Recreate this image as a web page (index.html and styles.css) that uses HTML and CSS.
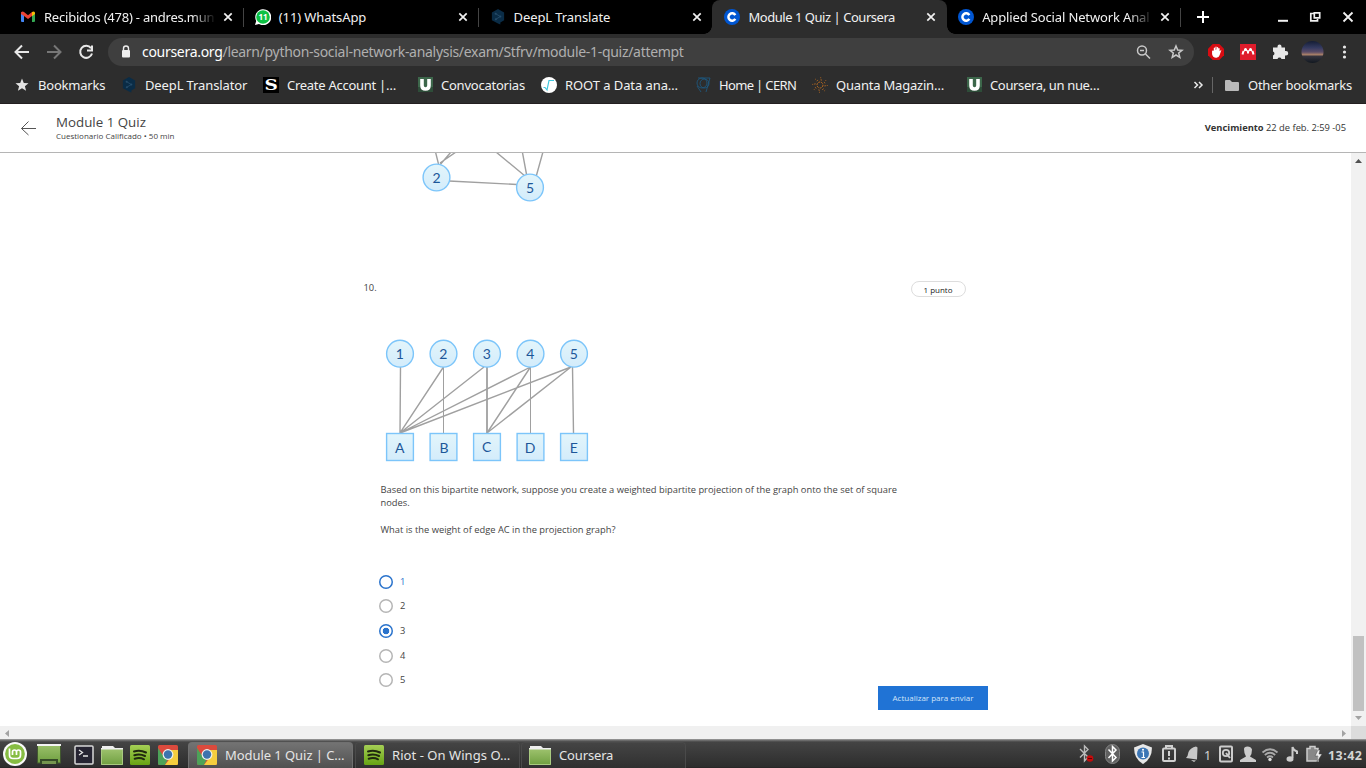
FILE: index.html
```html
<!DOCTYPE html>
<html lang="es">
<head>
<meta charset="utf-8">
<title>Module 1 Quiz | Coursera</title>
<link rel="stylesheet" href="styles.css">
</head>
<body>
<svg class="defs" width="0" height="0" aria-hidden="true">
  <defs>
    <linearGradient id="node" x1="0" y1="0" x2="0" y2="1"><stop offset="0" stop-color="#e3f5fb"/><stop offset="1" stop-color="#d3ecfb"/></linearGradient>
    <linearGradient id="green" x1="0" y1="0" x2="0" y2="1"><stop offset="0" stop-color="#9cc16c"/><stop offset="1" stop-color="#6f9f40"/></linearGradient>
    <linearGradient id="spot" x1="0" y1="0" x2="0" y2="1"><stop offset="0" stop-color="#a5cf55"/><stop offset="1" stop-color="#67a414"/></linearGradient>
    <linearGradient id="sky" x1="0" y1="0" x2="0" y2="1"><stop offset="0" stop-color="#141d35"/><stop offset=".3" stop-color="#343a60"/><stop offset=".5" stop-color="#5b4c68"/><stop offset=".62" stop-color="#a87f68"/><stop offset=".7" stop-color="#35333d"/><stop offset="1" stop-color="#111820"/></linearGradient>
    <symbol id="x" viewBox="0 0 10 10"><path d="M1.3 1.3 8.7 8.7M8.7 1.3 1.3 8.7" stroke="#f1f1f1" stroke-width="1.7" fill="none"/></symbol>
    <symbol id="deepl" viewBox="0 0 14 17"><path d="M7 0 13.5 3.7V12L9.5 14.3V16.5L7 15.3.5 12V3.7Z" fill="#0a2c46"/><path d="M4.5 5 9.5 8 4.8 10.8" stroke="#254b68" fill="none"/><circle cx="4.5" cy="5" r="1.1" fill="#254b68"/><circle cx="9.5" cy="8" r="1.1" fill="#254b68"/><circle cx="4.7" cy="10.8" r="1.1" fill="#254b68"/></symbol>
    <symbol id="coursera" viewBox="0 0 16 16"><circle cx="8" cy="8" r="8" fill="#0056d2"/><path d="M11.3 6.1A3.7 3.7 0 1 0 11.3 9.9" stroke="#fff" stroke-width="2.5" fill="none"/></symbol>
    <symbol id="u" viewBox="0 0 16 16"><path d="M1 0H16V15H1Z" fill="#3d674b"/><path d="M1 10H16V15H1Z" fill="#2e4d39"/><path d="M5 2V8.5Q5 12 8.5 12T12 8.5V2" stroke="#fff" stroke-width="3.6" fill="none"/></symbol>
    <symbol id="chrome" viewBox="0 0 20 20"><rect width="20" height="20" rx="1.5" fill="#db4a3d"/><path d="M0 3 6 12 10 14 7 20H1.500Q0 20 0 18.500Z" fill="#4da258"/><path d="M10 5H20V18.500Q20 20 18.500 20H7L13 12Z" fill="#f6ce3e"/><circle cx="10" cy="9.500" r="5.400" fill="#f1f1ec"/><circle cx="10" cy="9.500" r="4.200" fill="#3d73ad"/></symbol>
    <symbol id="spotify" viewBox="0 0 20 20"><rect width="20" height="20" rx="1.500" fill="url(#spot)"/><path d="M4 6.500Q10 4.500 16 7.500M4.300 10.200Q10 8.500 15 11M4.700 13.700Q10 12.300 14 14.300" stroke="#20280f" stroke-width="2" stroke-linecap="round" fill="none"/></symbol>
    <symbol id="folder" viewBox="0 0 22 20"><path d="M1 3V1H12L14 3H22V5H0V3Z" fill="#eee"/><rect x="0" y="4.500" width="22" height="15.500" fill="url(#green)"/><path d="M.5 5V19.500H21.500V5" fill="none" stroke="#a9ca80"/></symbol>
  </defs>
</svg>

<header class="browser">
  <div class="tabs">
    <div class="tab">
      <svg class="fav" viewBox="0 0 16 16"><path d="M1 3.500H4V13H2Q1 13 1 12Z" fill="#4285f4"/><path d="M12 3.500H15V12Q15 13 14 13H12Z" fill="#34a853"/><path d="M1 5V3.500Q2.500 1.800 4 3L8 6.200 12 3V7L8 10 4 7Z" fill="#ea4335"/><path d="M12 3Q14 1.800 15 3.500V5L12 7.200Z" fill="#fbbc04"/></svg>
      <span class="tab-name fade t-gmail">Recibidos (478) - andres.mun</span><svg class="close"><use href="#x"/></svg>
    </div>
    <div class="tab line">
      <svg class="fav" viewBox="0 0 16 16"><path d="M0 16 1.200 12A8 8 0 1 1 4 15Z" fill="#fff"/><circle cx="8" cy="8" r="6.800" fill="#0cc143"/><text x="8" y="10.500" text-anchor="middle" class="wa-count">11</text></svg>
      <span class="tab-name t-wa">(11) WhatsApp</span><svg class="close"><use href="#x"/></svg>
    </div>
    <div class="tab line">
      <svg class="fav"><use href="#deepl"/></svg>
      <span class="tab-name t-deepl">DeepL Translate</span><svg class="close"><use href="#x"/></svg>
    </div>
    <div class="tab active">
      <svg class="fav"><use href="#coursera"/></svg>
      <span class="tab-name t-quiz">Module 1 Quiz | Coursera</span><svg class="close"><use href="#x"/></svg>
    </div>
    <div class="tab last">
      <svg class="fav"><use href="#coursera"/></svg>
      <span class="tab-name fade t-asna">Applied Social Network Anal</span><svg class="close"><use href="#x"/></svg>
    </div>
    <div class="window-controls line">
      <svg width="186" height="34"><path d="M17 17H29M23 11V23" stroke="#fff" stroke-width="2"/><path d="M98 20.800H108" stroke="#f1f1f1" stroke-width="2"/><path d="M133.500 13.500H130.800V20.800H137.500V19M134.300 12.800H139.700V17.800H134.300Z" stroke="#f1f1f1" stroke-width="1.700" fill="none"/><path d="M163.500 12.500 172.500 21.500M172.500 12.500 163.500 21.500" stroke="#f1f1f1" stroke-width="1.800"/></svg>
    </div>
  </div>
  <div class="toolbar">
    <svg class="nav" width="108" height="36" fill="none" stroke-width="2"><path d="M29 18H16M22 11.500 15.500 18 22 24.500" stroke="#e8e8e8"/><path d="M47 18H60M54 11.500 60.500 18 54 24.500" stroke="#777"/><path d="M91 14.200A6 6 0 1 0 92 19.500M92 11.500V16.500H87" stroke="#e8e8e8"/></svg>
    <div class="omnibox">
      <svg width="34" height="28"><rect x="14" y="12" width="8" height="7.500" rx="1" fill="#eee"/><path d="M15.500 12V10.500A2.500 2.500 0 0 1 20.500 10.500V12" fill="none" stroke="#eee" stroke-width="1.400"/></svg>
      <span class="url"><b>coursera.org</b>/learn/python-social-network-analysis/exam/Stfrv/module-1-quiz/attempt</span>
      <svg class="omni-actions" width="68" height="28" fill="none" stroke="#c9c9c9" stroke-width="1.500"><circle cx="16" cy="12.500" r="4.500"/><path d="M19.500 16 24 20.500M14 12.500H18"/><path d="M50 8 51.700 12 56 12.300 52.700 15 53.800 19.300 50 17 46.200 19.300 47.300 15 44 12.300 48.300 12Z"/></svg>
    </div>
    <svg class="extensions" width="174" height="36">
      <path d="M20.700 10H27.300L32 14.700V21.300L27.300 26H20.700L16 21.300V14.700Z" fill="#d70c12"/><path d="M20.700 17V20Q21 23 24.300 23.200 26.500 23 27 21L28.200 17.500 27 18.500V14.500M22.400 19V14M24 18V13M25.600 18V13.500" fill="#fff" stroke="#fff" stroke-width="1.200" stroke-linecap="round"/>
      <rect x="48" y="10" width="16" height="16" fill="#df1c2b"/><path d="M50.500 20.500 51.500 17M56 17.500V19.500M61.500 20.500 60.500 17" stroke="#fff" stroke-width="2" fill="none"/><path d="M52 17 53.500 15.500 56 17.500 58.500 15.500 60 17" stroke="#fff" stroke-width="1.500" fill="none"/><circle cx="53.500" cy="15.500" r="1.500" fill="#fff"/><circle cx="58.500" cy="15.500" r="1.500" fill="#fff"/>
      <path d="M82 13.500H85.500V12.500A2 2 0 0 1 89.500 12.500V13.500H93V17H94A2 2 0 0 1 94 21.500H93V25H89.500A2.100 2.100 0 0 0 85.500 25H81V21.500A2.100 2.100 0 0 0 81 17.500V13.500Z" fill="#e8e8e8"/>
      <circle cx="120.500" cy="18" r="11" fill="url(#sky)"/>
      <g fill="#e8e8e8"><circle cx="152.500" cy="13" r="1.600"/><circle cx="152.500" cy="18" r="1.600"/><circle cx="152.500" cy="23" r="1.600"/></g>
    </svg>
  </div>
  <nav class="bookmarks">
    <a class="b1"><svg class="fav" viewBox="0 0 16 16"><path d="M8 1.500 9.800 5.900 14.500 6.200 10.900 9.200 12.100 13.800 8 11.300 3.900 13.800 5.100 9.200 1.500 6.200 6.200 5.900Z" fill="#e3e3e3"/></svg><span>Bookmarks</span></a>
    <a class="b2"><svg class="fav"><use href="#deepl"/></svg><span>DeepL Translator</span></a>
    <a class="b3"><svg class="fav" viewBox="0 0 16 16"><rect width="16" height="16" fill="#000"/><text x="1.500" y="13" class="s-mark" textLength="13" lengthAdjust="spacingAndGlyphs">S</text></svg><span>Create Account |…</span></a>
    <a class="b4"><svg class="fav"><use href="#u"/></svg><span>Convocatorias</span></a>
    <a class="b5"><svg class="fav" viewBox="0 0 16 16"><circle cx="8" cy="8" r="8" fill="#fff"/><path d="M2.500 10.500H4L6 13 8 3.500H13" fill="none" stroke="#3fc6dc" stroke-width="1.200"/></svg><span>ROOT a Data ana…</span></a>
    <a class="b6"><svg class="fav" viewBox="0 0 16 16" fill="none" stroke="#1d5c86" stroke-width=".8"><circle cx="7" cy="6" r="5"/><circle cx="9.500" cy="6.500" r="4.500"/><path d="M2 9 6 15M15 1 11 15M3 1H15"/></svg><span>Home | CERN</span></a>
    <a class="b7"><svg class="fav" viewBox="0 0 16 16" fill="none" stroke="#b76a21"><circle cx="8" cy="8" r="3" stroke-dasharray="2 1"/><circle cx="8" cy="8" r="5.200" stroke-dasharray="1.500 2.580"/><circle cx="8" cy="8" r="7.300" stroke-dasharray="1 4.730"/></svg><span>Quanta Magazin…</span></a>
    <a class="b8"><svg class="fav"><use href="#u"/></svg><span>Coursera, un nue…</span></a>
    <svg class="more" width="50" height="36"><path d="M4.500 15 7.500 18 4.500 21M9 15 12 18 9 21" stroke="#e8e8e8" stroke-width="1.500" fill="none"/><path d="M22.500 10V26" stroke="#666"/><path d="M35 14Q35 13 36 13H40L42 15H48Q49 15 49 16V23Q49 24 48 24H36Q35 24 35 23Z" fill="#b9b9b9"/></svg>
    <span class="other">Other bookmarks</span>
  </nav>
</header>

<section class="quiz-head">
  <svg width="56" height="48"><path d="M36 24.500H21.500M28.500 17.500 21.500 24.500 28.500 31" fill="none" stroke="#555"/></svg>
  <div class="quiz-name"><h1>Module 1 Quiz</h1><p>Cuestionario Calificado • 50 min</p></div>
  <p class="due"><b>Vencimiento</b> 22 de feb. 2:59 -05</p>
</section>

<div class="viewport">
  <main>
    <svg class="graph-top" width="140" height="52" viewBox="415 153 140 52">
      <path d="M435 150 439 166 451 152M440 163 456 152M496 152 525 176M522 150 527 177M543.500 150 536 177M449 181 517 184.500" stroke="#a0a0a0" stroke-width="1.400" fill="none"/>
      <g fill="url(#node)" stroke="#7cc5fa" stroke-width="1.400"><circle cx="436.500" cy="177.500" r="13.400"/><circle cx="530" cy="187.500" r="13.400"/></g>
      <g class="node-label"><text x="436.500" y="183">2</text><text x="530" y="193">5</text></g>
    </svg>
    <div class="q-head"><span>10.</span><span class="points">1 punto</span></div>
    <svg class="graph" width="220" height="130" viewBox="380 335 220 130">
      <path d="M400.500 367 400 433 443.500 367M400 433 484 367M400 433 530.500 367M400 433 571 367M487 433 530.500 367M487 433 571 367M572.500 367 573.500 433" stroke="#a0a0a0" stroke-width="1.400" fill="none"/>
      <path d="M443.500 367V433M530.500 367V433" stroke="#a0a0a0"/><path d="M487 367V433" stroke="#a0a0a0" stroke-width="1.800"/>
      <g fill="url(#node)" stroke="#7cc5fa" stroke-width="1.400"><circle cx="400" cy="353.700" r="13.400"/><circle cx="443.500" cy="353.700" r="13.400"/><circle cx="487" cy="353.700" r="13.400"/><circle cx="530.500" cy="353.700" r="13.400"/><circle cx="574" cy="353.700" r="13.400"/>
      <rect x="386.600" y="433.500" width="26.800" height="27"/><rect x="430.100" y="433.500" width="26.800" height="27"/><rect x="473.600" y="433.500" width="26.800" height="27"/><rect x="517.100" y="433.500" width="26.800" height="27"/><rect x="560.600" y="433.500" width="26.800" height="27"/></g>
      <g class="node-label"><text x="399.700" y="359">1</text><text x="443.200" y="359">2</text><text x="486.700" y="359">3</text><text x="530.200" y="359">4</text><text x="573.700" y="359">5</text><text x="399.700" y="452.500">A</text><text x="444" y="452.500">B</text><text x="486.700" y="451.500">C</text><text x="530.200" y="452.500">D</text><text x="573.700" y="452.500">E</text></g>
    </svg>
    <div class="prompt">
      <p>Based on this bipartite network, suppose you create a weighted bipartite projection of the graph onto the set of square<br>nodes.</p>
      <p>What is the weight of edge AC in the projection graph?</p>
    </div>
    <ul class="options">
      <li class="hover"><i></i>1</li>
      <li><i></i>2</li>
      <li class="checked"><i></i>3</li>
      <li><i></i>4</li>
      <li><i></i>5</li>
    </ul>
    <button class="submit">Actualizar para enviar</button>
  </main>
  <div class="vscroll"><svg width="15" height="573"><path d="M4 10 7.500 6 11 10Z" fill="#505050"/><rect x="2" y="483" width="11" height="75" fill="#c1c1c1"/><path d="M4 563H11L7.500 567Z" fill="#a3a3a3"/></svg></div>
  <div class="hscroll"><svg width="1351" height="13"><path d="M9 4V11L5 7.500Z" fill="#a3a3a3"/><path d="M1342 4V11L1346 7.500Z" fill="#a3a3a3"/></svg><span></span></div>
</div>

<footer class="taskbar">
  <svg class="launchers" width="188" height="29">
    <circle cx="15" cy="15" r="12" fill="#fafafa"/><circle cx="15" cy="15" r="9.900" fill="#87bd43"/><path d="M9.500 9.500V16Q9.500 19.500 13 19.500H17Q20.500 19.500 20.500 16V13Q20.500 11 18.500 11T16.500 13V16M16.500 13Q16.500 11 14.500 11T12.500 13V16" fill="none" stroke="#fff" stroke-width="1.700"/>
    <rect x="37.500" y="5.500" width="23" height="18.500" fill="url(#green)" stroke="#42592f"/><path d="M37 6H61" stroke="#f4f4f4" stroke-width="2"/><path d="M40 25V20H58V25" fill="#354b27"/><rect x="42" y="22" width="14" height="3" fill="#75954f"/>
    <rect x="75" y="7" width="18" height="18" rx="1" fill="#262432" stroke="#d9d9d9" stroke-width="1.500"/><path d="M79 11 82.500 13.500 79 16M83 17H88" stroke="#e4e4e4" fill="none" stroke-width="1.300"/>
    <use href="#folder" x="101" y="6" width="22" height="20"/><use href="#spotify" x="130" y="6" width="20" height="20"/><use href="#chrome" x="158" y="6" width="20" height="20"/>
  </svg>
  <div class="task current"><svg width="20" height="20"><use href="#chrome"/></svg><span>Module 1 Quiz | C…</span></div>
  <div class="task t-riot"><svg width="20" height="20"><use href="#spotify"/></svg><span>Riot - On Wings O…</span></div>
  <div class="task t-files"><svg width="22" height="20"><use href="#folder"/></svg><span>Coursera</span></div>
  <svg class="tray" width="292" height="29" viewBox="1074 739 292 29">
    <path d="M1080 749 1088 757 1084.500 761V746L1088 749.500 1080 757.500" fill="none" stroke="#bbb" stroke-width="1.400"/><circle cx="1090" cy="758.500" r="3.300" fill="#c40b0b"/><path d="M1088 758.500H1092" stroke="#5c0505"/>
    <rect x="1105.500" y="744.500" width="14" height="19" rx="7" fill="#606060" stroke="#858585"/><path d="M1108.500 749.500 1116 757.500 1112.500 761V746.500L1116 750 1108.500 758" fill="none" stroke="#fff" stroke-width="1.500"/>
    <path d="M1143 744 1152 747.500Q1152 759 1143 764 1134 759 1134 747.500Z" fill="#e8e8e8"/><circle cx="1143" cy="753.500" r="6" fill="#3c76b5"/><path d="M1141.500 752H1143.500V757M1141.500 757.500H1145" stroke="#fff" fill="none" stroke-width="1.200"/><circle cx="1143" cy="749.700" r="1" fill="#fff"/>
    <rect x="1163" y="748.500" width="12" height="12.500" rx="1" fill="none" stroke="#d0d0d0" stroke-width="2"/><path d="M1166 748V746H1172V748M1169 751V756M1169 757.500V759.500" stroke="#d0d0d0" stroke-width="2" fill="none"/>
    <path d="M1186 758Q1188 756 1188.500 752 1190.500 747.500 1196 746.500L1197.500 747.500 1197 759.500ZM1191 760 1196 760.500 1194 762Z" fill="#c8c8c8"/>
    <rect x="1220" y="746.500" width="12" height="15" rx="1" fill="none" stroke="#ccc" stroke-width="2"/><circle cx="1226" cy="753" r="3.200" fill="none" stroke="#ccc" stroke-width="1.800"/><path d="M1226 753 1230 758" stroke="#ccc" stroke-width="2"/>
    <path d="M1244 749Q1244 746.500 1247.500 746.500T1252 749.500Q1252 754 1250 756.500L1256 760V762H1240V760L1246 756.500Q1244 754 1244 749Z" fill="#ccc"/>
    <path d="M1262.500 752.500Q1270 746 1277.500 752.500M1264.800 755Q1270 750.500 1275.200 755M1267 757.500Q1270 755 1273 757.500" fill="none" stroke="#aaa" stroke-width="1.700"/><circle cx="1270" cy="759.500" r="1.700" fill="#ddd"/>
    <path d="M1292.500 758V747Q1293 750 1297 751.500V754" stroke="#ccc" stroke-width="2" fill="none"/><ellipse cx="1290" cy="759" rx="3.500" ry="2.700" fill="#ccc"/>
    <path d="M1307 748.500H1310V746.500H1315V748.500H1318V761H1307Z" fill="#888" stroke="#ccc" stroke-width="1.500"/><path d="M1318 750 1315 756H1318L1317 762 1322 754H1319L1320 750Z" fill="#eee" stroke="#444" stroke-width=".5"/>
    <text x="1204" y="759.500" class="count">1</text><text x="1328" y="759.500" class="clock" textLength="34">13:42</text>
  </svg>
</footer>
</body>
</html>
```
FILE: styles.css
```css
* { box-sizing: border-box; }
body { margin: 0; width: 1366px; height: 768px; overflow: hidden; display: flex; flex-direction: column; background: #fff; font-family: "Noto Sans", "Open Sans", sans-serif; color: #f1f1f1; }
h1, p, ul { margin: 0; padding: 0; }
svg { display: block; flex: none; }
.defs { position: absolute; }
.browser { height: 104px; background: #2d2d2d; border-bottom: 1px solid #231f20; }
.tabs { height: 34px; background: #000; display: flex; }
.tab { width: 235px; padding: 0 10px 0 12px; display: flex; align-items: center; font-size: 13px; position: relative; }
.tab:first-child { width: 243px; padding-left: 20px; }
.line::before { content: ""; position: absolute; left: 0; top: 8px; width: 1px; height: 19px; background: #444; }
.tab.active { width: 235px; padding-right: 11px; background: #2d2d2d; border-radius: 8px 8px 0 0; }
.tab.active::before, .tab.active::after { content: ""; position: absolute; bottom: 0; width: 8px; height: 8px; }
.tab.active::before { left: -8px; background: radial-gradient(circle at 0 0, #000 7.5px, #2d2d2d 8px); }
.tab.active::after { right: -8px; background: radial-gradient(circle at 100% 0, #000 7.5px, #2d2d2d 8px); }
.tab.last { width: 233px; padding-left: 11px; }
.fav { width: 16px; height: 16px; margin-right: 8px; }
.tab-name { flex: 1; white-space: nowrap; margin-right: 7px; }
.fade { mask-image: linear-gradient(to right, #000 86%, transparent); }
.t-gmail { letter-spacing: -.22px; }
.t-wa, .t-deepl { letter-spacing: -.1px; }
.t-quiz { letter-spacing: -.46px; }
.t-asna { letter-spacing: -.14px; }
.close { width: 10px; height: 10px; }
.window-controls { position: relative; flex: 1; }
.toolbar { height: 36px; display: flex; }
.omnibox { width: 1086px; height: 28px; margin-top: 4px; border-radius: 14px; background: #3f3f3f; display: flex; align-items: center; }
.url { flex: 1; font-size: 14px; letter-spacing: -.3px; line-height: 20px; padding-bottom: 1px; color: #afafaf; white-space: nowrap; }
.url b { font-weight: 400; color: #fff; }
.extensions { margin-left: -2px; }
.bookmarks { height: 30px; display: flex; align-items: center; padding-left: 14px; font-size: 13px; }
.bookmarks a { display: flex; align-items: center; white-space: nowrap; height: 30px; }
.b1 { width: 107px; letter-spacing: -.2px; }
.b2 { width: 142px; letter-spacing: -.12px; }
.b3 { width: 154px; letter-spacing: -.27px; }
.b4 { width: 124px; letter-spacing: -.23px; }
.b5 { width: 154px; letter-spacing: -.08px; }
.b6 { width: 117px; letter-spacing: -.65px; }
.b7 { width: 154px; letter-spacing: -.2px; }
.b8 { width: 224px; letter-spacing: -.35px; }
.more { margin-right: 8px; }
.other { white-space: nowrap; letter-spacing: -.25px; }
.wa-count { font: 700 8px "Noto Sans", sans-serif; fill: #fff; }
.s-mark { font: 700 14px "DejaVu Serif", serif; fill: #fff; }

.quiz-head { height: 49px; display: flex; border-bottom: 1px solid #b5b5b5; color: #444; font-family: "Open Sans", sans-serif; }
.quiz-name { flex: 1; }
.quiz-name h1 { font-size: 13.33px; font-weight: 400; line-height: 18px; margin-top: 9px; }
.quiz-name p { font-size: 8px; line-height: 10px; }
.due { font-size: 9.33px; line-height: 14px; margin: 17px 20px 0 0; color: #333; }

.viewport { height: 586px; display: grid; grid-template: 573px 13px / 1351px 15px; color: #444; font-family: "Open Sans", sans-serif; }
main { display: flex; flex-direction: column; align-items: flex-start; font-size: 9.33px; }
.graph-top { margin-left: 415px; }
.q-head { margin: 76px 0 0 363.5px; width: 602px; height: 16px; display: flex; justify-content: space-between; line-height: 13px; }
.points { width: 55px; height: 16px; border: 1px solid #ddd; border-radius: 8px; font-size: 8px; line-height: 15px; text-align: center; color: #222; }
.graph { margin: 38px 0 0 380px; }
.node-label { font: 14px Lato, sans-serif; fill: #1d5799; text-anchor: middle; }
.prompt { margin: 18px 0 0 380.5px; line-height: 13.33px; white-space: nowrap; }
.prompt p + p { margin-top: 13.33px; }
.options { margin: 38.5px 0 0 379px; list-style: none; }
.options li { height: 24.6px; display: flex; gap: 7px; line-height: 14px; }
.options i { width: 14px; height: 14px; border-radius: 50%; box-shadow: inset 0 0 0 1.5px #b5b5b5; }
.options .hover { color: #2a73cc; }
.options .hover i, .options .checked i { box-shadow: inset 0 0 0 1.5px #2a73cc; }
.options .checked i { background: radial-gradient(circle, #2a73cc 3px, transparent 3.6px); }
.submit { width: 110px; height: 24px; margin: -12px 0 0 878px; padding: 0; border: 0; background: #2073d5; color: #d3e4f8; font: 8px "Open Sans", sans-serif; }
.vscroll { background: #f1f1f1; }
.hscroll { grid-column: 1 / 3; background: #f0f0f0; display: flex; justify-content: space-between; }
.hscroll span { width: 15px; background: #dcdcdc; }

.taskbar { height: 29px; background: linear-gradient(#a8a8a8 0, #777 1px, #444 3px, #2d2d2d 28px, #242021); display: flex; }
.task { width: 165px; padding: 2px 0 0 8px; margin-top: 3px; height: 26px; display: flex; gap: 8px; font-size: 13px; line-height: 21px; color: #e5e5e5; white-space: nowrap; letter-spacing: .05px; border: 1px solid #4a4a4a; border-bottom: 0; border-radius: 4px 4px 0 0; background: linear-gradient(#444, #303030); }
.task.current { background: linear-gradient(#737373, #505050); border-color: #707070; letter-spacing: -.06px; }
.t-riot { margin-left: 2px; }
.t-files { margin-left: 1px; letter-spacing: -.15px; padding-left: 7px; }
.tray { margin-left: auto; }
.clock { font: 700 12.500px "Noto Sans", sans-serif; fill: #d4d4d4; }
.count { font: 12.500px "Noto Sans", sans-serif; fill: #d4d4d4; }
```
